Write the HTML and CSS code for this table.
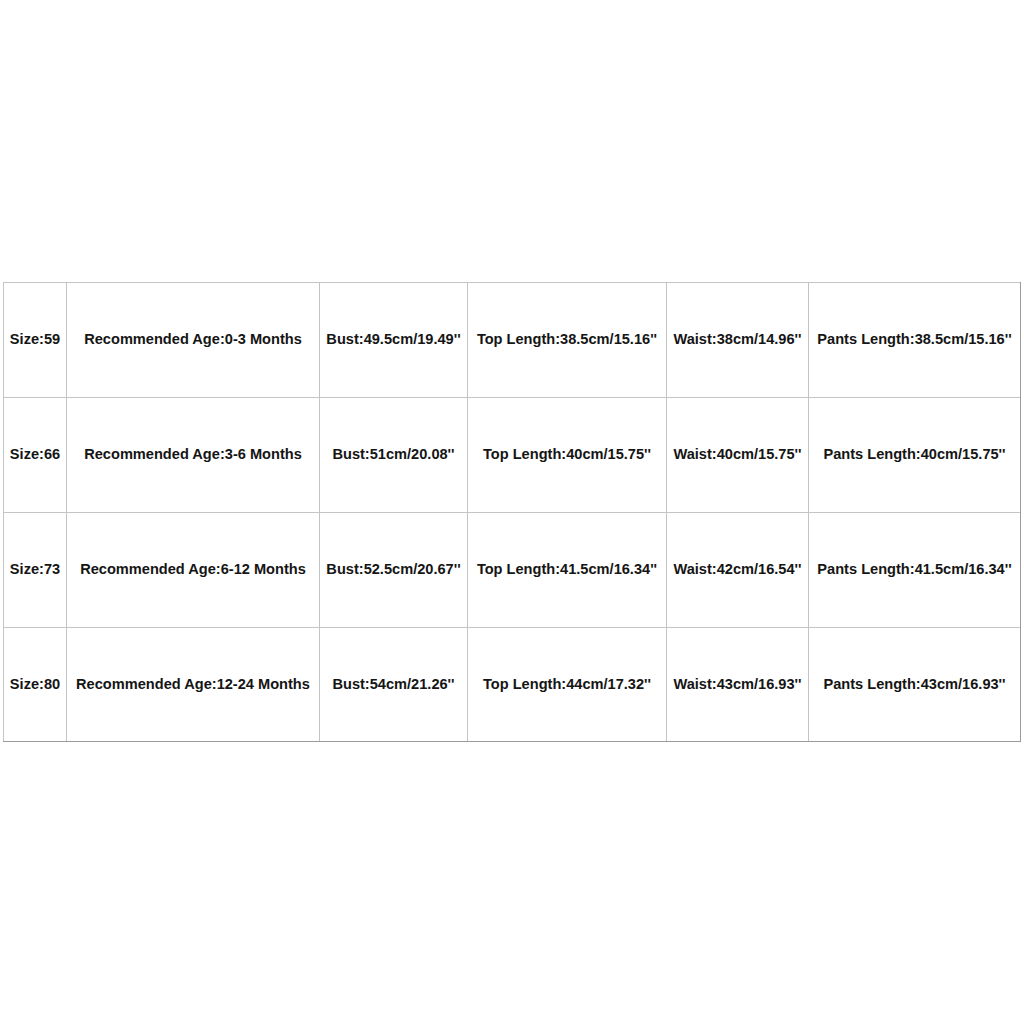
FILE: index.html
```html
<!DOCTYPE html>
<html lang="en">
<head>
    <meta charset="UTF-8">
    <title>Size Chart</title>
    <link rel="stylesheet" href="styles.css">
</head>
<body>
    <div class="size-chart">
        <div class="cell">Size:59</div>
        <div class="cell">Recommended Age:0-3 Months</div>
        <div class="cell">Bust:49.5cm/19.49''</div>
        <div class="cell">Top Length:38.5cm/15.16''</div>
        <div class="cell">Waist:38cm/14.96''</div>
        <div class="cell">Pants Length:38.5cm/15.16''</div>

        <div class="cell">Size:66</div>
        <div class="cell">Recommended Age:3-6 Months</div>
        <div class="cell">Bust:51cm/20.08''</div>
        <div class="cell">Top Length:40cm/15.75''</div>
        <div class="cell">Waist:40cm/15.75''</div>
        <div class="cell">Pants Length:40cm/15.75''</div>

        <div class="cell">Size:73</div>
        <div class="cell">Recommended Age:6-12 Months</div>
        <div class="cell">Bust:52.5cm/20.67''</div>
        <div class="cell">Top Length:41.5cm/16.34''</div>
        <div class="cell">Waist:42cm/16.54''</div>
        <div class="cell">Pants Length:41.5cm/16.34''</div>

        <div class="cell">Size:80</div>
        <div class="cell">Recommended Age:12-24 Months</div>
        <div class="cell">Bust:54cm/21.26''</div>
        <div class="cell">Top Length:44cm/17.32''</div>
        <div class="cell">Waist:43cm/16.93''</div>
        <div class="cell">Pants Length:43cm/16.93''</div>
    </div>
</body>
</html>
```

FILE: styles.css
```css
body {
    margin: 0;
    background: #fff;
    font-family: "Liberation Sans", Arial, sans-serif;
}
.size-chart {
    display: grid;
    grid-template-columns: 62px 252px 147px 198px 141px 211px;
    grid-template-rows: 114px 114px 114px 113px;
    gap: 1px;
    padding: 1px 0 0 1px;
    width: max-content;
    margin: 282px 0 0 3px;
    background: #c4c4c4;
    border-right: 1px solid #9a9a9a;
    border-bottom: 1px solid #9a9a9a;
}
.cell {
    background: #fff;
    display: flex;
    align-items: center;
    justify-content: center;
    padding-bottom: 2px;
    font-size: 14.6px;
    font-weight: bold;
    color: #151515;
    white-space: nowrap;
}
```
